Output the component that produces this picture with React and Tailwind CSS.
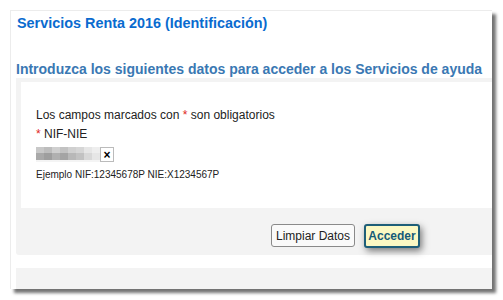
export default function App() {
  const blocks = [
    ["#c8c8c8", "#a9a9a9"],
    ["#bdbdbd", "#9e9e9e"],
    ["#cfcfcf", "#b0b0b0"],
    ["#c2c2c2", "#a4a4a4"],
    ["#d0d0d0", "#b8b8b8"],
    ["#d6d6d6", "#c2c2c2"],
    ["#e6e6e6", "#d8d8d8"],
    ["#eeeeee", "#e6e6e6"],
  ];
  return (
    <div className="w-[503px] h-[300px] bg-white overflow-hidden pl-[10px] pt-[10px]" style={{ fontFamily: '"Liberation Sans", Arial, sans-serif' }}>
      <div className="w-[482px] h-[279px] bg-white shadow-[4px_4px_3px_rgba(0,0,0,0.55)] border-t border-l border-[#ececec] overflow-hidden flex flex-col">
        <div className="pl-[6px] pt-[4px] text-[14.4px] leading-[16px] font-bold text-[#0a6bcf] whitespace-nowrap">Servicios Renta 2016 (Identificación)</div>
        <div className="pl-[5px] mt-[30px] text-[14px] leading-[16px] font-bold text-[#3a78b3] whitespace-nowrap">Introduzca los siguientes datos para acceder a los Servicios de ayuda</div>
        <div className="ml-[5px] mt-[1px] w-[520px] h-[177px] shrink-0 bg-[#f3f3f3] rounded-bl-[3px] pl-[5px] pt-[4px] flex flex-col">
          <div className="h-[126px] shrink-0 bg-white pl-[15px] pt-[26px] text-[#222]">
            <div className="text-[12px] leading-[14px]">Los campos marcados con <span className="text-[#e0261d]">*</span> son obligatorios</div>
            <div className="text-[12px] leading-[14px] mt-[5px]"><span className="text-[#e0261d]">*</span> NIF-NIE</div>
            <div className="mt-[6px] flex h-[15px] w-[78px]">
              <div className="flex">
                {blocks.map((b, i) => (
                  <div key={i} className="w-[8px] flex flex-col">
                    <div className="h-[6px]" style={{ background: b[0] }} />
                    <div className="h-[7px]" style={{ background: b[1] }} />
                    <div className="h-[2px] bg-[#f4f4f4]" />
                  </div>
                ))}
              </div>
              <div className="w-[14px] h-[15px] bg-white border border-[#bbb] flex items-center justify-center text-[12px] font-bold leading-none text-black">×</div>
            </div>
            <div className="mt-[7px] text-[10px] leading-[11px] text-[#222]">Ejemplo NIF:12345678P NIE:X1234567P</div>
          </div>
          <div className="flex gap-[9px] pl-[250px] pt-[16px]">
            <button className="h-[23px] px-[4px] text-[12px] text-[#222] bg-[#fafafa] border border-[#8a8a8a] rounded-[3px]">Limpiar Datos</button>
            <button className="h-[24px] w-[56px] text-[12px] font-bold text-[#165a78] bg-[#fbf8c3] border-2 border-[#1e5e78] rounded-[3px] shadow-[2px_3px_7px_rgba(0,0,0,0.5)]">Acceder</button>
          </div>
        </div>
        <div className="ml-[5px] mt-[13px] w-[520px] h-[30px] shrink-0 bg-[#f3f3f3]" />
      </div>
    </div>
  );
}
